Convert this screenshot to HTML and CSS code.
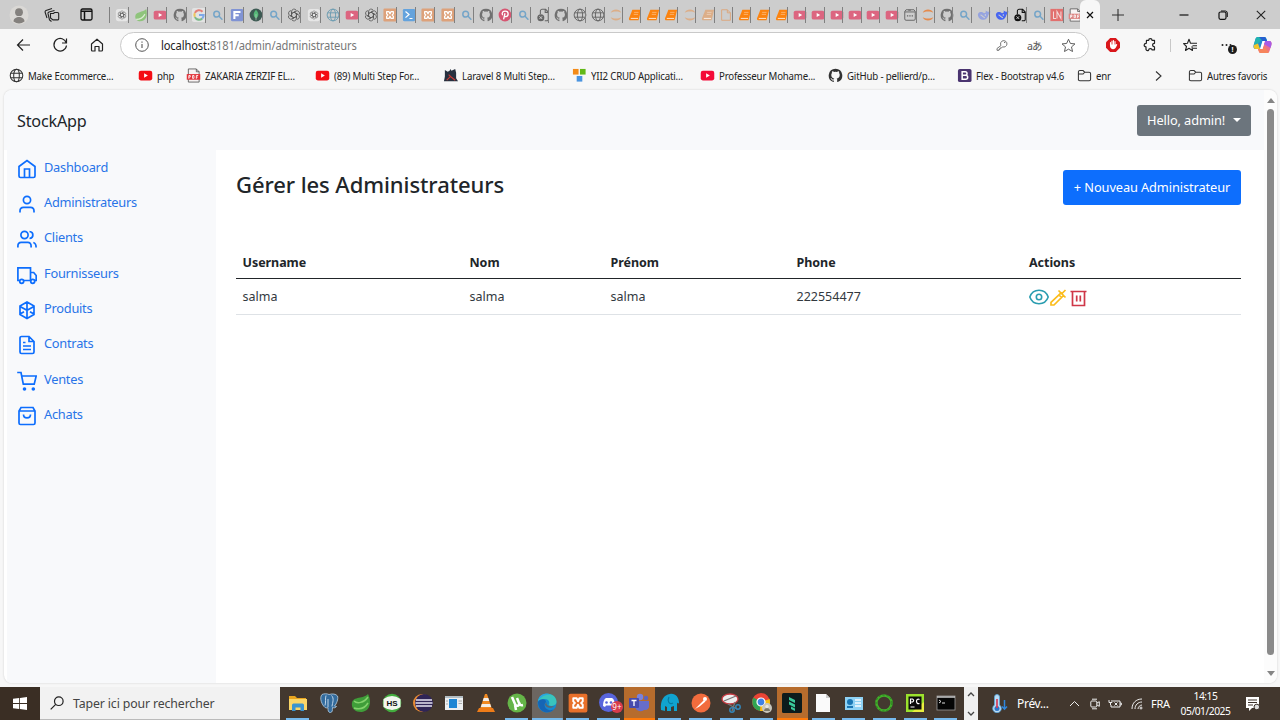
FILE: index.html
```html
<!DOCTYPE html>
<html lang="fr">
<head>
<meta charset="utf-8">
<title>StockApp - Administrateurs</title>
<link rel="stylesheet" href="styles.css">
</head>
<body>
<svg class="defs" width="0" height="0">
<defs>
<symbol id="gpt" viewBox="0 0 16 16"><g fill="none" stroke="#555" stroke-width=".9"><path id="petal" d="M5.200 9.600V4A2.900 2.900 0 0 1 10.500 2.500M5.200 6.400L10 3.700"/><use href="#petal" transform="rotate(60 8 8)"/><use href="#petal" transform="rotate(120 8 8)"/><use href="#petal" transform="rotate(180 8 8)"/><use href="#petal" transform="rotate(240 8 8)"/><use href="#petal" transform="rotate(300 8 8)"/></g></symbol>
<symbol id="gptbox" viewBox="0 0 16 16"><rect x="1" y="1" width="14" height="14" rx="3" fill="#e6e6e6"/><use href="#gpt" x="2.500" y="2.500" width="11" height="11"/></symbol>
<symbol id="leaf" viewBox="0 0 16 16"><path d="M14 1c2 7 0 14-7 14C3 15 1 12 1.500 9 2 4 10 5 14 1z" fill="#8fc47c"/><path d="M2.500 13c5 0 8-2 10-6" stroke="#dcecd4" stroke-width="1.300" fill="none"/></symbol>
<symbol id="yt" viewBox="0 0 16 16"><rect x=".8" y="3" width="14.400" height="10.200" rx="2.200" fill="currentColor"/><path d="M6.500 5.700v4.600L10.500 8z" fill="#fff"/></symbol>
<symbol id="gh" viewBox="0 0 16 16"><path fill="currentColor" d="M8 .8a7.300 7.300 0 0 0-2.300 14.200c.4.100.5-.2.500-.4v-1.400c-2 .4-2.500-.9-2.700-1.300-.4-.8-.8-1-1-1.200.8-.2 1.400.3 1.800.9.600.8 1.200.8 1.900.5.100-.5.300-.8.600-1C5 10.800 3.500 10.100 3.500 7.400c0-.8.300-1.500.8-2-.1-.2-.4-1 .1-2 0 0 .7-.2 2 .8a7 7 0 0 1 3.200 0c1.300-1 2-.8 2-.8.500 1 .2 1.800.1 2 .5.500.8 1.200.8 2 0 2.700-1.500 3.400-3.300 3.700.4.300.6.700.6 1.400v2.100c0 .2.200.5.500.4A7.300 7.300 0 0 0 8 .8z"/></symbol>
<symbol id="goo" viewBox="0 0 16 16"><rect width="16" height="16" rx="2" fill="#e3e3e3"/><g fill="none" stroke-width="2.400"><path d="M12 4.200A5.300 5.300 0 0 0 3.300 5.600" stroke="#e58078"/><path d="M3.300 5.600a5.300 5.300 0 0 0 0 4.800" stroke="#ecc760"/><path d="M3.300 10.400a5.300 5.300 0 0 0 8.400 1.500" stroke="#7cb98a"/><path d="M11.700 11.900A5.300 5.300 0 0 0 13.300 8H8" stroke="#7ea8e8"/></g></symbol>
<symbol id="mag" viewBox="0 0 16 16"><g fill="none" stroke="#75a5c8" stroke-width="1.700" stroke-linecap="round"><circle cx="6.500" cy="7" r="3.300"/><path d="M9.200 9.500l3.300 3.300"/></g></symbol>
<symbol id="fbox" viewBox="0 0 16 16"><rect x="1" y="1" width="14" height="14" rx="1.500" fill="#8093d4"/><path d="M5 12.500V4.500h7M5 8.300h5" stroke="#fff" stroke-width="2.400" fill="none"/></symbol>
<symbol id="mongo" viewBox="0 0 16 16"><circle cx="8" cy="8" r="7.300" fill="#3d5a53"/><path d="M8 2c4 4 3 8 0 10-3-2-4-6 0-10z" fill="#55b878"/><path d="M8 7v7" stroke="#c5dccc" stroke-width=".7"/></symbol>
<symbol id="glb" viewBox="0 0 16 16"><g fill="none" stroke="currentColor" stroke-width="1.100"><circle cx="8" cy="8" r="6.700"/><ellipse cx="8" cy="8" rx="3" ry="6.700"/><path d="M1.800 5.500h12.400M1.800 10.500h12.400"/></g></symbol>
<symbol id="xam" viewBox="0 0 16 16"><rect x=".5" y=".5" width="15" height="15" rx="1.500" fill="currentColor"/><path d="M8 6.600L6.900 4.200H4.200v2.500L5.500 8 4.200 9.300v2.500h2.700L8 9.400l1.100 2.400h2.700V9.300L10.500 8l1.300-1.300V4.200H9.100z" fill="none" stroke="#fff" stroke-width="1.500" stroke-linejoin="round"/></symbol>
<symbol id="psh" viewBox="0 0 16 16"><rect x="1" y="1" width="14" height="14" rx="1.500" fill="#64a3dd"/><path d="M4 4l4 3.500L4 11M8.500 12H12" stroke="#fff" stroke-width="1.400" fill="none"/></symbol>
<symbol id="pin" viewBox="0 0 16 16"><circle cx="8" cy="8" r="7.300" fill="#d65672"/><path d="M5.300 8.300C3.700 5.300 6 3.500 8.200 3.500c4.800 0 4 6.400.8 6.400-.8 0-1.300-.4-1.500-.8M8 6l-1.600 7" stroke="#fff" stroke-width="1.500" fill="none"/></symbol>
<symbol id="filex" viewBox="0 0 16 16"><path d="M5 7V3.500A2 2 0 0 1 7 1.500h4l3 3V13a1.500 1.500 0 0 1-1.500 1.500H10M10.500 1.500V5H14" fill="none" stroke="currentColor" stroke-width="1.200"/><circle cx="5.500" cy="11" r="4" fill="currentColor"/><path d="M4 9.500l3 3m0-3l-3 3" stroke="#ddd" stroke-width="1"/></symbol>
<symbol id="jup" viewBox="0 0 16 16"><path d="M2 5.500c2-5 10-5 12 0-3-2-9-2-12 0zM2 10.500c2 5 10 5 12 0-3 2-9 2-12 0z" fill="currentColor"/></symbol>
<symbol id="book" viewBox="0 0 16 16"><path d="M5 2h10l-2.400 10-.6 2H3a2 2 0 0 1-1.700-2.700z" fill="currentColor"/><path d="M3.200 11.900h8.300" stroke="#fff" stroke-width=".9"/><path d="M7 5h5M6.500 7.300h5" stroke="#fff" stroke-opacity=".6" stroke-width=".7"/></symbol>
<symbol id="page" viewBox="0 0 16 16"><path d="M3 2h6.500L13 5.500V14H3zM9.500 2v3.500H13" fill="none" stroke="#dca77d" stroke-width="1.100"/></symbol>
<symbol id="dev" viewBox="0 0 16 16"><path d="M2 4l1.500-2h9L14 4v8.500a1.500 1.500 0 0 1-1.500 1.500h-9A1.500 1.500 0 0 1 2 12.500zM2 4.500h12M6 2.500h3" fill="none" stroke="#666" stroke-width="1.100"/><path d="M4.500 9h7" stroke="#666" stroke-width="1.500" stroke-dasharray="1.500 1.200"/></symbol>
<symbol id="whale" viewBox="0 0 16 16"><path d="M1 7c1-3 5-3 7-1l2-1V2.500c1 1.500 2.500 2 5.500 1.500-.5 2-2 2.500-2.500 4-.5 2.500-2 5-5 5.500C4 14 1 11 1 7z" fill="currentColor"/><path d="M4 8c2 0 3 3 5 3" stroke="#cecece" fill="none" stroke-width="1.200"/><circle cx="9.500" cy="8" r=".8" fill="#ddd"/></symbol>
<symbol id="ln" viewBox="0 0 16 16"><rect x=".5" y="1" width="15" height="14" fill="#e2706e"/><path d="M4 4v8h3M8 12V4l4.500 8V4" fill="none" stroke="#f3d9d8" stroke-width="1.200"/></symbol>
<symbol id="pdf" viewBox="0 0 16 16"><path d="M2.500 1h8.500l3 3v11H2.500z" fill="#f7f3f3" stroke="#555" stroke-width=".9"/><path d="M11 1v3h3" fill="none" stroke="#555" stroke-width=".9"/><rect x=".8" y="6.500" width="14.400" height="6" fill="currentColor"/><path d="M3 11.500V8h1.500v1.700H3M7 8h1.500v3H7zM11 11.500V8h2M11 9.700h1.500" fill="none" stroke="#fff" stroke-width=".9"/></symbol>
<symbol id="fold" viewBox="0 0 16 16"><path d="M1.500 13V4A1.500 1.500 0 0 1 3 2.700h3.500l1.700 1.800H13A1.500 1.500 0 0 1 14.500 6v6a1.500 1.500 0 0 1-1.500 1.500H3A1.500 1.500 0 0 1 1.500 12zM1.500 6.500h5l1.700-2" fill="none" stroke="#333" stroke-width="1.100"/></symbol>
</defs>
</svg>

<header class="tabstrip">
  <div class="win-left">
    <svg width="20" height="20" viewBox="0 0 20 20"><circle cx="10" cy="10" r="9.500" fill="#dad8d5"/><circle cx="10" cy="7.200" r="3.900" fill="#84817e"/><path d="M4.500 16.500c0-6 11-6 11 0a9 9 0 0 1-11 0z" fill="#84817e"/></svg>
    <svg width="16" height="16" viewBox="0 0 16 16" fill="none" stroke="#222" stroke-width="1.100"><path d="M6.500 6.500h3l1-1h3a1.200 1.200 0 0 1 1.200 1.200v5a1.200 1.200 0 0 1-1.200 1.200H9l-2.500-2z"/><path d="M10.500 3.500L5 5a1.500 1.500 0 0 0-1 1.700L5.500 13l2 1.500M8 1.500l-6 2A1.500 1.500 0 0 0 1.200 5.500L3 11"/></svg>
    <svg width="13" height="13" viewBox="0 0 13 13"><rect x="1" y="1" width="11" height="11" rx="1.500" fill="none" stroke="#111" stroke-width="1.300"/><path d="M1 3.200h11M4.500 4v8" stroke="#111" stroke-width="1.500"/></svg>
  </div>
  <div class="tabs wide">
    <i><svg><use href="#gptbox"/></svg></i><i><svg><use href="#leaf"/></svg></i><i class="yt"><svg><use href="#yt"/></svg></i><i class="grey"><svg><use href="#gh"/></svg></i><i><svg><use href="#goo"/></svg></i><i><svg><use href="#mag"/></svg></i><i><svg><use href="#fbox"/></svg></i><i><svg><use href="#mongo"/></svg></i><i><svg><use href="#mag"/></svg></i><i><svg><use href="#gpt"/></svg></i><i><svg><use href="#gptbox"/></svg></i><i class="teal"><svg><use href="#glb"/></svg></i><i class="yt"><svg><use href="#yt"/></svg></i><i><svg><use href="#gpt"/></svg></i><i class="peach"><svg><use href="#xam"/></svg></i><i><svg><use href="#psh"/></svg></i><i class="peach"><svg><use href="#xam"/></svg></i><i class="peach"><svg><use href="#xam"/></svg></i><i><svg><use href="#mag"/></svg></i><i class="grey"><svg><use href="#gh"/></svg></i><i><svg><use href="#pin"/></svg></i><i><svg><use href="#mag"/></svg></i>
  </div>
  <div class="tabs">
    <i class="dim"><svg><use href="#filex"/></svg></i><i class="grey"><svg><use href="#gh"/></svg></i><i class="dim"><svg><use href="#glb"/></svg></i><i class="dim"><svg><use href="#glb"/></svg></i><i class="pale"><svg><use href="#jup"/></svg></i><i class="orange"><svg><use href="#book"/></svg></i><i class="orange"><svg><use href="#book"/></svg></i><i class="orange"><svg><use href="#book"/></svg></i><i class="pale"><svg><use href="#jup"/></svg></i><i class="pale"><svg><use href="#book"/></svg></i><i><svg><use href="#page"/></svg></i><i class="orange"><svg><use href="#book"/></svg></i><i class="orange"><svg><use href="#book"/></svg></i><i class="orange"><svg><use href="#book"/></svg></i><i class="yt"><svg><use href="#yt"/></svg></i><i class="yt"><svg><use href="#yt"/></svg></i><i class="yt"><svg><use href="#yt"/></svg></i><i class="yt"><svg><use href="#yt"/></svg></i><i class="yt"><svg><use href="#yt"/></svg></i><i class="yt"><svg><use href="#yt"/></svg></i><i><svg><use href="#dev"/></svg></i><i class="rust"><svg><use href="#jup"/></svg></i><i class="grey"><svg><use href="#gh"/></svg></i><i><svg><use href="#mag"/></svg></i><i class="lilac"><svg><use href="#whale"/></svg></i><i class="indigo"><svg><use href="#whale"/></svg></i><i class="black"><svg><use href="#filex"/></svg></i><i><svg><use href="#mag"/></svg></i><i><svg><use href="#ln"/></svg></i><i class="last"><svg><use href="#pdf"/></svg></i>
  </div>
  <div class="active-tab"><svg width="8" height="8" viewBox="0 0 8 8"><path d="M1 1l6 6M7 1L1 7" stroke="#111" stroke-width="1.200"/></svg></div>
  <svg class="plus" width="12" height="12" viewBox="0 0 12 12"><path d="M6 0v12M0 6h12" stroke="#333" stroke-width="1.100"/></svg>
  <div class="win-btns">
    <svg width="10" height="10" viewBox="0 0 10 10"><path d="M.5 5h9" stroke="#111" stroke-width="1.200"/></svg>
    <svg width="10" height="10" viewBox="0 0 10 10"><path d="M3 1h4.500A2 2 0 0 1 9.300 3v4" fill="none" stroke="#111"/><rect x="1" y="2" width="7" height="7.300" rx="1.500" fill="none" stroke="#111" stroke-width="1.200"/></svg>
    <svg width="10" height="10" viewBox="0 0 10 10"><path d="M.8.800l8.400 8.400M9.200.800L.8 9.200" stroke="#222" stroke-width="1.100"/></svg>
  </div>
</header>

<div class="toolbar">
  <div class="nav-btns">
    <svg width="16" height="16" viewBox="0 0 16 16"><path d="M14 8H1.500M7 2.500L1.500 8 7 13.500" fill="none" stroke="#222" stroke-width="1.200"/></svg>
    <svg width="16" height="16" viewBox="0 0 16 16"><path d="M13.300 6A6.300 6.300 0 1 0 13.500 8.500M13.500 1.500V6H9" fill="none" stroke="#222" stroke-width="1.200"/></svg>
    <svg width="14" height="14" viewBox="0 0 14 14"><path d="M1.500 6L7 1.200 12.500 6v6a1 1 0 0 1-1 1H9V8.500H5V13H2.500a1 1 0 0 1-1-1z" fill="none" stroke="#222" stroke-width="1.200" stroke-linejoin="round"/></svg>
  </div>
  <div class="address">
    <svg width="14" height="14" viewBox="0 0 14 14"><circle cx="7" cy="7" r="6.300" fill="none" stroke="#555"/><path d="M7 6v4M7 3.500v1.200" stroke="#555" stroke-width="1.100"/></svg>
    <span class="url">localhost:<em>8181/admin/administrateurs</em></span>
    <svg class="key" width="12" height="12" viewBox="0 0 12 12"><path d="M5 6.500a3.200 3.200 0 1 1 1.500 1.300L5.500 9H4v1.300H3v1H1V9.500z" fill="none" stroke="#666" stroke-width=".9"/><circle cx="8.700" cy="3.400" r=".7" fill="#666"/></svg>
    <span class="lang">aあ</span>
    <svg width="15" height="15" viewBox="0 0 16 16"><path d="M8 1.300l2 4.500 4.900.5-3.700 3.200 1.100 4.900L8 11.900l-4.300 2.500 1.100-4.900L1.100 6.300 6 5.800z" fill="none" stroke="#555" stroke-linejoin="round"/></svg>
  </div>
  <div class="tools">
    <svg width="14" height="14" viewBox="0 0 14 14"><path d="M4.200 0h5.600L14 4.200v5.600L9.800 14H4.200L0 9.800V4.200z" fill="#d9171b"/><path d="M4.500 7V4.500M6 7V3M7.500 7V2.600M9 7V3.500" stroke="#fff" stroke-width="1.100" stroke-linecap="round"/><path d="M4 6.500h5.500L11 6c.4 0 .2 1-.6 2.500-.9 1.800-1.700 2.700-3.300 2.700S4 9.500 4 8z" fill="#fff"/></svg>
    <svg width="14" height="14" viewBox="0 0 14 14"><path d="M3.500 2.300h2.200c0-2.200 3.300-2.200 3.300 0h2.500v3c-2.600 0-2.600 3.500 0 3.500v3H9c0-1.600-3.300-1.600-3.300 0 0 1.200-2.200 1-2.700-.3V8.800c-2.500 0-2.500-3.500.3-3.500z" fill="none" stroke="#222" stroke-width="1.200" stroke-linejoin="round"/></svg>
    <span class="bar"></span>
    <svg width="15" height="14" viewBox="0 0 15 14"><path d="M9 8.300L9.500 12.500 6 10.200 2.500 12.500l1-4L.6 5.600l3.900-.4L6 1.300l1.500 3.900H14M9.500 7.700H14M10 10.300h4" fill="none" stroke="#222" stroke-width="1.100" stroke-linejoin="round"/></svg>
    <span class="dots"><svg width="12" height="4" viewBox="0 0 12 4"><g fill="#222"><circle cx="1.500" cy="2" r="1"/><circle cx="5.500" cy="2" r="1"/><circle cx="9.500" cy="2" r="1"/></g></svg><b>!</b></span>
    <svg width="19" height="18" viewBox="0 0 19 18"><path d="M5 1h6.500c1 0 1.500 1 1.800 2L14 5H9.500L7 13H3C.5 13 0 11 .7 8.700L2.500 3C3 1.500 3.800 1 5 1z" fill="#238ad0"/><path d="M5 1h6.500c1 0 1.500 1 1.800 2L14 5h-3L8 3.500 6 7 .9 9l1.600-6C3 1.500 3.800 1 5 1z" fill="#20b4b0"/><path d="M1 9l4-1.500L7 13H3C.8 13 .2 11 1 9z" fill="#f0c52c"/><path d="M6 1h5.500c1 0 1.500 1 1.800 2L14 5H9.500z" fill="#2560d0"/><path d="M14 17H7.500c-1 0-1.500-1-1.800-2L5 13h4.500L12 5h4c2.500 0 3 2 2.300 4.300L16.500 15c-.5 1.500-1.300 2-2.500 2z" fill="#ec6e8e"/><path d="M12 5h4c2.500 0 3 2 2.300 4.300L17.500 12 11 8z" fill="#a95be5"/><path d="M5 13h5l1-3 5 6c-.5.700-1 1-2 1H7.500c-1 0-1.500-1-1.800-2z" fill="#f6845c"/><path d="M9.800 5h2l-2.400 8h-2z" fill="#fff"/></svg>
  </div>
</div>

<nav class="bookmarks">
  <a class="bk1 dark"><svg><use href="#glb"/></svg><span>Make Ecommerce...</span></a>
  <a class="bk2 red"><svg><use href="#yt"/></svg><span>php</span></a>
  <a class="bk3 red2"><svg><use href="#pdf"/></svg><span>ZAKARIA ZERZIF EL...</span></a>
  <a class="bk4 red"><svg><use href="#yt"/></svg><span>(89) Multi Step For...</span></a>
  <a class="bk5"><svg viewBox="0 0 16 16"><path d="M2 2l3 2 2-1 1-2 1 2 4-2 1 4v6l2 3H1l1-5z" fill="#27303f"/><path d="M4 13l4-4 5 4M6 7l2 2" stroke="#cc3a35" stroke-width="1.200" fill="none"/></svg><span>Laravel 8 Multi Step...</span></a>
  <a class="bk6"><svg viewBox="0 0 16 16"><rect x="1" y="1" width="6" height="6" fill="#f48b18"/><rect x="8.500" y="1" width="6" height="6" fill="#62b817"/><rect x="5" y="8.500" width="6" height="6" fill="#4a94e0"/></svg><span>YII2 CRUD Applicati...</span></a>
  <a class="bk7 red3"><svg><use href="#yt"/></svg><span>Professeur Mohame...</span></a>
  <a class="bk8 dark"><svg><use href="#gh"/></svg><span>GitHub - pellierd/p...</span></a>
  <a class="bk9"><svg viewBox="0 0 16 16"><rect x="1" y="1" width="14.500" height="14" rx="2" fill="#4a3470"/><path d="M5.500 4h3.300a1.800 1.800 0 0 1 0 3.800H5.500zM5.500 7.800h3.800a2 2 0 0 1 0 4.200H5.500z" fill="none" stroke="#fff" stroke-width="1.600"/></svg><span>Flex - Bootstrap v4.6</span></a>
  <a class="bk10"><svg><use href="#fold"/></svg><span>enr</span></a>
  <svg class="more" width="7" height="10" viewBox="0 0 7 10"><path d="M1 .5L6 5 1 9.500" fill="none" stroke="#333" stroke-width="1.100"/></svg>
  <a class="bk11"><svg><use href="#fold"/></svg><span>Autres favoris</span></a>
</nav>

<div class="viewport">
  <div class="app">
    <div class="navbar"><span class="brand">StockApp</span><button class="user"><span>Hello, admin!</span><i></i></button></div>
    <div class="body">
      <aside class="sidebar">
        <a><svg viewBox="0 0 20 20"><path d="M2 7.500L10 1.500l8 6V17a1.500 1.500 0 0 1-1.500 1.500h-13A1.500 1.500 0 0 1 2 17zM7.500 18.500V10h5v8.500"/></svg><span>Dashboard</span></a>
        <a><svg viewBox="0 0 20 20"><circle cx="10" cy="6" r="3.600"/><path d="M3 18.500V17c0-2 1.300-3.700 3.500-3.700h7c2.200 0 3.500 1.700 3.500 3.700v1.500"/></svg><span>Administrateurs</span></a>
        <a><svg viewBox="0 0 20 20"><circle cx="7.500" cy="6" r="3.600"/><path d="M.9 18.500V17c0-2 1.300-3.700 3.300-3.700h6.600c2 0 3.300 1.700 3.300 3.700v1.500M12.500 2.500c4.500.500 4.500 6.500 0 7M16.300 13.500c2 .5 2.800 2 2.800 5"/></svg><span>Clients</span></a>
        <a><svg viewBox="0 0 20 20"><path d="M2.500 15.500H.9V2.900h12.600v12.600H7M13.500 7.500h3.200l2.500 3v5h-1.300M13.500 15.500v-8"/><circle cx="4.700" cy="16.300" r="2"/><circle cx="15.700" cy="16.300" r="2"/></svg><span>Fournisseurs</span></a>
        <a><svg viewBox="0 0 20 20"><path d="M10 2l7 4v8.500l-7 4-7-4V6zM3 6.500l7 3.800 7-3.800M10 10.300v8.200M10 2v8M3 14l4-2.200M17 14l-4-2.200"/></svg><span>Produits</span></a>
        <a><svg viewBox="0 0 20 20"><path d="M12 1.500H4.500A1.500 1.500 0 0 0 3 3v14a1.500 1.500 0 0 0 1.500 1.500h11A1.500 1.500 0 0 0 17 17V6.500zM12 1.500v5h5M6 7.500h2.500M6 11h8M6 14.500h8"/></svg><span>Contrats</span></a>
        <a><svg viewBox="0 0 20 20"><path d="M.2 1.500H4l2.300 11.700h10.900L19.200 5H4.800"/><g fill="#0d6efd" stroke="none"><circle cx="7.500" cy="18" r="1.800"/><circle cx="16.300" cy="18" r="1.800"/></g></svg><span>Ventes</span></a>
        <a><svg viewBox="0 0 20 20"><path d="M4 1.500h12L18 5v12a1.500 1.500 0 0 1-1.500 1.500h-13A1.500 1.500 0 0 1 2 17V5zM2 5h16M6.500 8.500c0 4.500 7 4.500 7 0"/></svg><span>Achats</span></a>
      </aside>
      <main class="main">
        <div class="head"><h1>Gérer les Administrateurs</h1><button class="new">+ Nouveau Administrateur</button></div>
        <table>
          <colgroup><col class="c1"><col class="c2"><col class="c3"><col class="c4"><col></colgroup>
          <thead><tr><th>Username</th><th>Nom</th><th>Prénom</th><th>Phone</th><th>Actions</th></tr></thead>
          <tbody><tr><td>salma</td><td>salma</td><td>salma</td><td>222554477</td><td><div class="acts">
            <svg width="20" height="16" viewBox="0 0 20 16" fill="none" stroke="#2a9db0" stroke-width="1.600"><path d="M.8 8C4-1 16-1 19.200 8 16 17 4 17 .8 8z"/><circle cx="10" cy="8" r="2.700"/></svg>
            <svg width="17" height="17" viewBox="0 0 17 17" fill="none" stroke="#fbbc1a" stroke-width="1.700"><path d="M1 13.300L11 4l2.500 2.500L4 16H1zM8.500 1.500l7 7M15.500 1l-4 4M9.500 6.500l2 2"/></svg>
            <svg width="17" height="17" viewBox="0 0 17 17" fill="none" stroke="#cf3748" stroke-width="1.700"><path d="M.5 1.500h16M2.500 1.500v14h12v-14M6.700 5.500v6M10.300 5.500v6"/></svg>
          </div></td></tr></tbody>
        </table>
      </main>
    </div>
  </div>
  <div class="scroll"><i class="up"></i><i class="thumb"></i><i class="down"></i></div>
</div>

<footer class="taskbar">
  <div class="start"><svg width="14" height="13" viewBox="0 0 14 13" fill="#fff"><path d="M0 1.800L6.200 1v5.100H0zM7 .9L14 0v6.100H7zM0 6.900h6.200V12L0 11.200zM7 6.900h7V13l-7-.9z"/></svg></div>
  <div class="search"><svg width="14" height="14" viewBox="0 0 14 14" fill="none" stroke="#222" stroke-width="1.200"><circle cx="8.800" cy="5.200" r="4.300"/><path d="M5.700 8.300L.7 13.300"/></svg><span>Taper ici pour rechercher</span></div>
  <div class="apps">
    <i class="run"><svg viewBox="0 0 20 20"><path d="M1 3h6l2 2h9v12H1z" fill="#e8a51f"/><path d="M1 6h18v11H1z" fill="#fbd667"/><path d="M4 18v-6q0-1.500 1.500-1.500h9Q16 10.500 16 12v6h-3.500v-3.500h-5V18z" fill="#3b94cf"/></svg></i>
    <i><svg viewBox="0 0 20 20"><path d="M3 1.500c2-1 5-1 7 0 3-1 7-.7 8.500 1.500 1 3-1 8-3 10l2 .5c-1 1.500-2.500 1.500-4 1-.3 3 .3 4.500-2 5-2.500 0-2.500-2-2.500-5-1 1-2.500 0-3 0C3 12 0 5 3 1.500z" fill="#336b9c" stroke="#b8d1e5" stroke-width=".8"/><path d="M7 2.500c-1 3 0 7-1 10M12.500 2.500c3 3 1 7 .5 11M9 6v8" stroke="#cfe0ef" fill="none" stroke-width=".9"/></svg></i>
    <i><svg viewBox="0 0 20 20"><path d="M17 1c4 8 2 17-6 18C4 19.500 0 15 1 10 2 3 13 6 17 1z" fill="#3f9d39"/><path d="M3 8c3 3 10 2 14-4M3 15c6 2 11 0 14-5" fill="none" stroke="#83d16c" stroke-width="1.500"/></svg></i>
    <i><svg viewBox="0 0 20 20"><circle cx="10" cy="10" r="9.300" fill="#43ad3e"/><path d="M1.500 6q8.500-6 17 0v8q-8.500 6-17 0z" fill="#f3f6ef"/><text x="10" y="13.300" class="hs">HS</text></svg></i>
    <i><svg viewBox="0 0 20 20"><circle cx="9" cy="10" r="9" fill="#e88b33"/><circle cx="11" cy="10" r="9" fill="#2e2456"/><path d="M3 7h16M2.500 10h17M3 13h16" stroke="#e5e2f1" stroke-width="1.300"/></svg></i>
    <i><svg viewBox="0 0 20 20"><rect x="1" y="3" width="18" height="14" fill="#eceff1"/><path d="M1 4h18" stroke="#b3bec4" stroke-width="2"/><rect x="5" y="6" width="8" height="9" fill="#1e86d4"/><path d="M14.500 8H18M14.500 10.500H18M2 8h2M2 11h2" stroke="#999" stroke-width=".8"/></svg></i>
    <i><svg viewBox="0 0 20 20"><path d="M9 1h2l5 15H4z" fill="#f18a22"/><path d="M7.700 5h4.600l1 3H6.700zM5.800 11h8.400l1 3H4.800z" fill="#f2eee9"/><path d="M3 15h14l2 4H1z" fill="#ef7c18"/></svg></i>
    <i class="run"><svg viewBox="0 0 20 20"><circle cx="10" cy="10" r="9.500" fill="#65b548"/><path d="M5 4l3 7c1 3 5 2 4-1l-2-5M12 9.500c1 3 2 3 4 2.500M8 12l1 5" fill="none" stroke="#fff" stroke-width="2.500"/></svg></i>
    <i class="run cur"><svg viewBox="0 0 20 20"><circle cx="10" cy="10" r="9.500" fill="#1688cf"/><path d="M1 8C3-2 18-1 19.500 8c.5 5-5 6-8 4 2-3 0-6-4-6C4 6 2 7 1 8z" fill="#39c4bd"/><path d="M1 8C2 1 9-1 14 2 8 1 4 4 1 8z" fill="#2aa6e0"/><path d="M1 9c3-4 8-3 8 0-3 3-1 7 3 8 2 .5 4 0 5-1-4 6-16 4-16-7z" fill="#1565b5"/><path d="M10 9c-2 3 2 5 7 4-2 3-9 2-9-2z" fill="#5c6870"/></svg></i>
    <i class="run xa"><svg viewBox="0 0 20 20"><use href="#xam" width="20" height="20"/></svg></i>
    <i class="run"><svg viewBox="0 0 20 20"><circle cx="9.500" cy="9.500" r="9.500" fill="#5865dc"/><path d="M4 13c0-4 1-7 3-8h6c2 1 3 4 3 8l-3 1-1-1.500H7L6 14z" fill="#fff"/><circle cx="7.500" cy="9.500" r="1.300" fill="#5865dc"/><circle cx="12" cy="9.500" r="1.300" fill="#5865dc"/></svg><b class="badge">9+</b></i>
    <i class="alert"><svg viewBox="0 0 20 20"><circle cx="11" cy="4" r="3.200" fill="#7a82dc"/><circle cx="17" cy="5" r="2.200" fill="#5d63bd"/><path d="M6 8h14v6c-1 3-3 3-5 3-4 3-9 0-9-4z" fill="#666dcb"/><rect x="0" y="5" width="10" height="10" rx="1" fill="#454bae"/><path d="M2.500 7.500h5M5 7.500v5.500" stroke="#fff" stroke-width="1.300"/></svg></i>
    <i class="run"><svg viewBox="0 0 20 20"><path d="M1 17C0 7 4 2 10 1c5-1 9 3 9 9-1 1-2 0-2-1v9h-3v-5l-3 1v4H7v-4l-2-1v5z" fill="#10a3cf"/><path d="M9 4c-2 4 0 8 4 6" stroke="#087b9f" fill="none" stroke-width="1.200"/></svg></i>
    <i class="run"><svg viewBox="0 0 20 20"><circle cx="10" cy="10" r="9.500" fill="#f26c3d"/><path d="M4 16l9-9 1.500 1.500-6 5z" fill="#fff"/><circle cx="14" cy="6" r="2" fill="#fff"/></svg></i>
    <i class="run"><svg viewBox="0 0 20 20"><ellipse cx="9" cy="6" rx="8" ry="5" fill="#eee" stroke="#c93a42" stroke-width="1.300"/><path d="M3 8l12-5M7 11l9 5M14 9l-3 9" stroke="#777" stroke-width="1.300"/><g fill="none" stroke="#3486b9" stroke-width="1.500"><circle cx="17" cy="14" r="2.200"/><circle cx="11" cy="17" r="2.200"/></g></svg></i>
    <i class="run"><svg viewBox="0 0 20 20"><circle cx="9" cy="9" r="9" fill="#e94435"/><path d="M9 9L1.500 4.500A9 9 0 0 0 8 18z" fill="#31a452"/><path d="M9 9l8.500-3A9 9 0 0 1 8 18z" fill="#f9bf0c"/><circle cx="9" cy="9" r="4" fill="#3f82e5" stroke="#fff" stroke-width="1.200"/><circle cx="15" cy="15" r="5" fill="#c9c7bd"/><path d="M12 18c0-4 6-4 6 0" fill="#7b7869"/><circle cx="15" cy="13.500" r="1.700" fill="#e9e6dc"/></svg></i>
    <i class="alert"><svg viewBox="0 0 20 20"><rect width="20" height="20" rx="1.500" fill="#0c1b1c"/><path d="M7 4l6 3v3L7 7zM7 8.500l6 3v3l-6-3zM9 13.500l4 2V18l-4-2z" fill="#39c99b"/></svg></i>
    <i class="run"><svg viewBox="0 0 20 20"><path d="M3 1h10l4 4v14H3z" fill="#fafafa"/><path d="M13 1v4h4" fill="#ccc"/></svg></i>
    <i class="run"><svg viewBox="0 0 20 20"><rect x="1" y="4" width="18" height="13" fill="#8ed2f5"/><circle cx="6" cy="9" r="3" fill="#1976b5"/><path d="M3 14h6" stroke="#1976b5" stroke-width="2"/><path d="M11 7h6M11 10h6M11 13h6" stroke="#f7fcff" stroke-width="1.500"/></svg></i>
    <i class="run"><svg viewBox="0 0 20 20"><circle cx="10" cy="10" r="7.600" fill="none" stroke="#43b02a" stroke-width="2.500"/><circle cx="10" cy="10" r="8" fill="none" stroke="#287820" stroke-width="1" stroke-dasharray="2 2"/></svg></i>
    <i class="run"><svg viewBox="0 0 20 20"><rect x="1" y="1" width="18" height="18" fill="#9be22d"/><path d="M19 9v10H7z" fill="#e9ee3f"/><rect x="3.500" y="3.500" width="13" height="13" fill="#0b0b0b"/><path d="M5.500 11V6h2q2.300 1.500 0 3h-2M14.500 6.500c-4-2-4 5.500 0 4M5.500 14h4" fill="none" stroke="#fff" stroke-width="1.200"/></svg></i>
    <i class="run"><svg viewBox="0 0 20 20"><rect x="1" y="3" width="18" height="14" fill="#050505" stroke="#999" stroke-width=".8"/><path d="M1 4h18" stroke="#ccc" stroke-width="1.500"/><path d="M3 7l2 1.500L3 10M6 10h3" fill="none" stroke="#ddd"/></svg></i>
  </div>
  <div class="spin"><svg width="8" height="5" viewBox="0 0 8 5"><path d="M1 4l3-3 3 3"/></svg><svg width="8" height="5" viewBox="0 0 8 5"><path d="M1 1l3 3 3-3"/></svg></div>
  <div class="tray">
    <svg class="thermo" width="16" height="19" viewBox="0 0 16 19"><path d="M2.500 3a2.500 2.500 0 0 1 5 0v8a4.300 4.300 0 1 1-5 0z" fill="#b9dcf5" stroke="#5aa7e0" stroke-width=".8"/><circle cx="5" cy="14.500" r="2.500" fill="#2b74c9"/><path d="M5 5v9" stroke="#d43b5a" stroke-width="1.700"/><path d="M12.500 6v9M10 12.500l2.500 2.700 2.500-2.700" fill="none" stroke="#2f86de" stroke-width="1.500"/></svg>
    <span class="prev">Prév...</span>
    <svg class="chev" width="11" height="7" viewBox="0 0 11 7"><path d="M1 6l4.500-4.500L10 6"/></svg>
    <svg class="meet" width="10" height="12" viewBox="0 0 10 12"><rect x=".8" y="3" width="6" height="6" rx="1"/><path d="M7 5l2.300-1.300v4.600L7 7M2 1.200h5M2 10.800h5"/></svg>
    <svg class="bat" width="14" height="10" viewBox="0 0 14 10"><path d="M5 2h7v6H3V6M12 4h1.300v2H12M6.500 3.500l3 3m0-3l-3 3M1 1v2.500h3V1M2.500 3.500V6"/></svg>
    <svg class="wifi" width="12" height="12" viewBox="0 0 12 12"><path d="M1 11C1 5 5 1 11 1M4 11c0-4 3-7 7-7M7 11c0-2 2-4 4-4"/><circle cx="10" cy="10" r="1"/></svg>
    <span class="fra">FRA</span>
    <div class="clock"><span>14:15</span><span>05/01/2025</span></div>
    <svg class="note" width="14" height="14" viewBox="0 0 14 14"><path d="M0 0h13v11H6l-3 3v-3H0z" fill="#fff" stroke="none"/><path d="M2 3h9M2 5.500h9M2 8h5" stroke="#3c3029"/><circle cx="10.800" cy="10" r="2.800" fill="#ddd" stroke="#3c3029"/></svg>
  </div>
</footer>
</body>
</html>
```
FILE: styles.css
```css
* { box-sizing: border-box; }
body { margin: 0; width: 1280px; height: 720px; overflow: hidden; display: flex; flex-direction: column; background: #f7f7f7; font-family: "Noto Sans", "Open Sans", sans-serif; color: #212529; }
svg { display: block; flex: none; }
i, em { font-style: normal; }
.defs { position: absolute; }

.tabstrip { height: 29px; flex: none; background: #cdcdcd; display: flex; align-items: center; }
.win-left { width: 109px; padding-left: 9px; display: flex; align-items: center; flex: none; }
.win-left svg:nth-child(2) { margin-left: 15px; }
.win-left svg:nth-child(3) { margin-left: 20px; }
.tabs { display: flex; flex: none; }
.tabs i { width: 18.36px; height: 16px; padding-left: 4.8px; border-left: 1px solid #808080; flex: none; }
.tabs.wide i { width: 19.15px; padding-left: 5.2px; }
.tabs svg { width: 14px; height: 14px; margin-top: 1px; }
.tabs .yt { color: #dc6580; }
.tabs .grey { color: #707070; }
.tabs .teal { color: #6e9db2; }
.tabs .peach { color: #dda17a; }
.tabs .dim { color: #666; }
.tabs .pale { color: #dcae88; }
.tabs .orange { color: #fb8310; }
.tabs .rust { color: #e58a4c; }
.tabs .lilac { color: #96a4df; }
.tabs .indigo { color: #4967f0; }
.tabs .black { color: #111; }
.tabs .last { width: 17.5px; padding-left: 4px; color: #dc8684; }
.active-tab { width: 20px; height: 29px; background: #f7f7f7; border-radius: 6px 6px 0 0; display: flex; align-items: center; justify-content: center; flex: none; }
.plus { margin-left: 12px; }
.win-btns { display: flex; gap: 28.5px; margin-left: auto; padding-right: 14px; }

.toolbar { height: 32px; flex: none; display: flex; align-items: center; }
.nav-btns { width: 120px; padding-left: 16px; display: flex; align-items: center; gap: 21px; }
.address { width: 969px; height: 27px; border: 1px solid #c9c9c9; border-radius: 14px; background: #fff; display: flex; align-items: center; padding: 0 12px 0 14px; }
.url { margin-left: 12px; font-size: 12px; letter-spacing: -.15px; color: #222; transform: scaleX(.93); transform-origin: left; }
.url em { color: #777; }
.key { margin-left: auto; }
.lang { width: 16px; margin: 0 18px 0 19px; font: 10.500px "Noto Sans", "Noto Sans CJK JP", sans-serif; letter-spacing: -.8px; color: #555; white-space: nowrap; }
.tools { flex: 1; display: flex; align-items: center; padding-left: 17px; }
.tools > :nth-child(2) { margin-left: 23px; }
.bar { width: 1px; height: 13px; background: #c8c8c8; margin: 0 12px 0 13px; }
.dots { position: relative; width: 18px; height: 16px; margin: 0 14px 0 23px; padding-top: 6px; }
.dots b { position: absolute; left: 7px; top: 8px; width: 9px; height: 9px; border-radius: 50%; background: #1c1c1c; color: #fff; font-size: 7px; line-height: 9px; text-align: center; }

.bookmarks { height: 29px; flex: none; display: flex; align-items: center; font-size: 11.300px; letter-spacing: -.2px; color: #222; padding-left: 9px; }
.bookmarks a { display: flex; align-items: center; gap: 4px; flex: none; white-space: nowrap; }
.bookmarks a svg { width: 15px; height: 15px; }
.bookmarks span { transform: scaleX(.855); transform-origin: left; }
.dark { color: #333; }
.dark span, .red span, .red2 span, .red3 span { color: #222; }
.red { color: #f40d14; }
.red2 { color: #e13138; }
.red3 { color: #f40a38; }
.bk1 { width: 129px; }
.bk2 { width: 48px; }
.bk3 { width: 129px; }
.bk4 { width: 128px; }
.bk5 { width: 129px; }
.bk6 { width: 128px; }
.bk7 { width: 128px; }
.bk8 { width: 129px; }
.bk9 { width: 120px; }
.bk10 { width: 78px; }
.more { margin-right: 26px; }

.viewport { width: 1273px; height: 593px; margin: 0 0 0 4px; flex: none; background: #fff; border-radius: 8px; overflow: hidden; display: flex; box-shadow: 0 0 2px #c8c8c8; }
.app { width: 1260px; }
.navbar { height: 60px; background: #f8f9fb; display: flex; align-items: center; justify-content: space-between; padding: 0 13px; }
.brand { font-size: 16.200px; letter-spacing: -.2px; padding-top: 2px; }
.user { font: 12.800px "Noto Sans", sans-serif; width: 114px; height: 31px; border: 0; border-radius: 3px; background: #6c757d; color: #fff; display: flex; align-items: center; gap: 8px; padding: 0 10px; white-space: nowrap; letter-spacing: -.1px; }
.user i { border: 4px solid transparent; border-top-color: #fff; border-bottom: 0; }
.body { display: flex; height: 533px; }
.sidebar { width: 209px; margin-left: 3px; background: #f8f9fb; }
.sidebar a { height: 35.350px; padding: 0 0 2px 10px; display: flex; align-items: center; gap: 7px; color: #2874e8; font-size: 12.800px; letter-spacing: -.25px; }
.sidebar svg { width: 20px; height: 20px; fill: none; stroke: #0d6efd; stroke-width: 1.700; margin-top: 4px; }
.main { width: 1048px; padding: 20px 23px 0 20px; }
.head { display: flex; justify-content: space-between; align-items: flex-start; height: 76px; }
h1 { margin: -1px 0 0; font-size: 22px; line-height: 30px; font-weight: 500; letter-spacing: -.08px; }
.new { font: 12.800px "Noto Sans", sans-serif; letter-spacing: -.1px; width: 178px; height: 35px; background: #0d6efd; color: #fff; border: 0; border-radius: 3px; padding: 0 0 2px; white-space: nowrap; }
table { width: 1005px; table-layout: fixed; border-collapse: separate; border-spacing: 0; font-size: 12.500px; }
.c1 { width: 227px; }
.c2 { width: 141px; }
.c3 { width: 186px; }
.c4 { width: 232.500px; }
th, td { text-align: left; padding: 0 6.500px; }
th { height: 33px; border-bottom: 1px solid #212529; font-weight: 700; letter-spacing: -.05px; }
td { height: 36px; border-bottom: 1px solid #dee2e6; color: #32383e; }
.acts { display: flex; align-items: center; padding-top: 1px; }
.acts svg:nth-child(2) { margin-left: 1px; }
.acts svg:nth-child(3) { margin: 2px 0 0 3px; }
.scroll { width: 13px; background: #fcfcfc; display: flex; flex-direction: column; align-items: center; padding-top: 8px; }
.up { border: 4.500px solid transparent; border-bottom: 5px solid #858585; border-top: 0; }
.thumb { width: 7px; height: 546px; margin: 6px 0 16px; background: #8a8a8a; border-radius: 4px; }
.down { border: 4.500px solid transparent; border-top: 5px solid #858585; border-bottom: 0; }

.taskbar { margin-top: auto; height: 33px; flex: none; background: #43382f; display: flex; color: #fff; }
.start { width: 40px; background: #3a2e24; display: flex; align-items: center; justify-content: center; flex: none; }
.search { width: 240px; flex: none; background: #f2f2f2; color: #444; display: flex; align-items: center; padding-left: 10px; gap: 9px; font-size: 12.300px; letter-spacing: -.12px; border-bottom: 1px solid #bbb; }
.apps { display: flex; width: 684px; padding-left: 2.300px; flex: none; }
.apps i { width: 30.650px; flex: none; height: 33px; position: relative; display: flex; justify-content: center; padding-top: 6px; background: linear-gradient(#76b9ed, #76b9ed) center bottom / 0 2px no-repeat; }
.apps i:nth-child(-n+7) { width: 31.300px; }
.apps svg { width: 20px; height: 20px; }
.apps .run { background-size: 23px 2px; }
.apps .cur { background-color: #6c6661; background-size: 100% 2px; }
.apps .xa { color: #e8702a; }
.apps .alert { background: #b66c2d; border-bottom: 2px solid #ff7a0a; }
.hs { font: bold 8px "Liberation Sans", sans-serif; text-anchor: middle; fill: #111; }
.badge { position: absolute; right: 1px; top: 14px; width: 12px; height: 12px; border-radius: 50%; background: #d83b4b; font-size: 8px; line-height: 12px; text-align: center; font-weight: 400; }
.spin { width: 14px; background: #f0f0f0; display: flex; flex-direction: column; justify-content: space-between; align-items: center; padding: 5px 0 4px; flex: none; }
.spin path { fill: none; stroke: #444; stroke-width: 1.300; }
.tray { flex: 1; display: flex; align-items: center; padding-left: 14px; font-size: 11px; background: #42372e; }
.tray > svg:not(.thermo) { fill: none; stroke: #eee; stroke-width: 1; }
.prev { width: 44px; margin-left: 9px; font-size: 12px; letter-spacing: -.3px; }
.chev { margin-left: 8px; }
.meet { margin-left: 10px; }
.bat { margin-left: 8px; }
.wifi { margin-left: 9px; }
.fra { width: 28px; margin-left: 8px; letter-spacing: -.3px; }
.clock { width: 53px; margin-left: 0; display: flex; flex-direction: column; align-items: center; font-size: 10.300px; line-height: 15px; letter-spacing: -.5px; }
.note { margin-left: 14px; }
```
